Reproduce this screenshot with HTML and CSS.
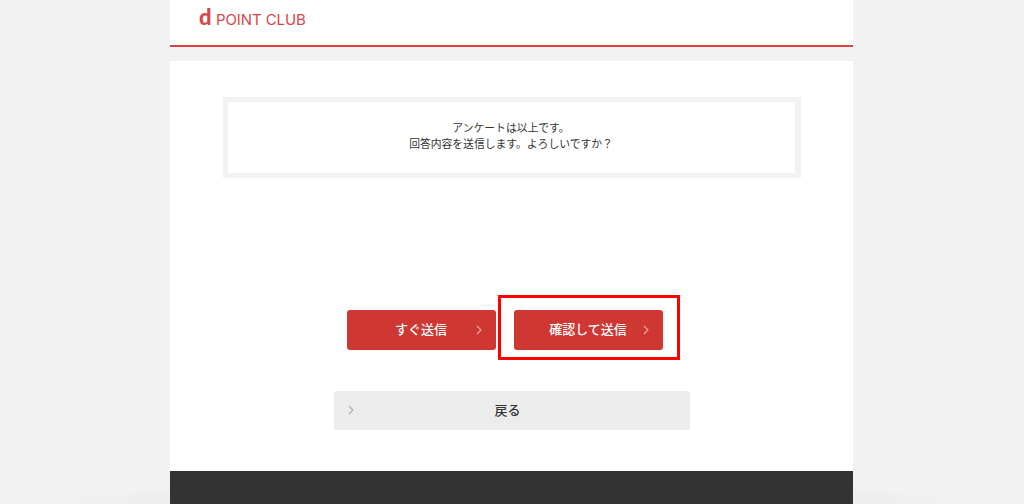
FILE: index.html
```html
<!DOCTYPE html>
<html lang="ja">
<head>
<meta charset="utf-8">
<title>dポイントクラブ アンケート</title>
<link rel="stylesheet" href="styles.css">
</head>
<body>
<div class="page">
  <header class="header">
    <div class="logo"><span class="logo-d">d</span><span class="logo-text">POINT CLUB</span></div>
  </header>
  <main class="main">
    <div class="notice">
      <p>アンケートは以上です。</p>
      <p>回答内容を送信します。よろしいですか？</p>
    </div>
    <div class="actions">
      <a class="btn btn-red">すぐ送信<svg class="chev" viewBox="0 0 6 10"><path d="M1 1l4 4-4 4"/></svg></a>
      <a class="btn btn-red btn-marked">確認して送信<svg class="chev" viewBox="0 0 6 10"><path d="M1 1l4 4-4 4"/></svg></a>
    </div>
    <a class="btn-back"><svg class="chev chev-back" viewBox="0 0 6 10"><path d="M1 1l4 4-4 4"/></svg>戻る</a>
  </main>
  <footer class="footer"></footer>
</div>
</body>
</html>
```
FILE: styles.css
```css
* { box-sizing: border-box; }
html, body { margin: 0; height: 100%; }
body {
  background: radial-gradient(ellipse 470px 26px at 50% 100%, #e0e0e0, #f2f2f2) #f2f2f2;
  font-family: "Noto Sans CJK JP", "Noto Sans", sans-serif;
  color: #333;
  overflow: hidden;
}
p { margin: 0; }
.page {
  width: 683px;
  margin-left: 170px;
  height: 504px;
  display: flex;
  flex-direction: column;
}
.header {
  height: 47px;
  background: #fff;
  border-bottom: 2px solid #e0433f;
  padding: 4px 0 0 29px;
}
.logo { display: flex; align-items: baseline; color: #d9454a; line-height: 26px; }
.logo-d { font: 900 22px/26px "Lato", sans-serif; width: 17px; }
.logo-text { font: 400 15px/26px "Inter", sans-serif; letter-spacing: -.1px; }
.main {
  margin-top: 14px;
  height: 410px;
  background: #fff;
  display: flex;
  flex-direction: column;
  align-items: center;
  padding-top: 36px;
}
.notice {
  width: 578px;
  height: 81px;
  border-style: solid;
  border-color: #f2f2f2;
  border-width: 5px 6px 5px 5px;
  display: flex;
  flex-direction: column;
  justify-content: center;
  align-items: center;
  font-size: 10.8px;
  line-height: 16px;
  padding-bottom: 5px;
}
.actions {
  margin: 132px 14px 0 0;
  display: flex;
  gap: 18px;
}
.btn {
  position: relative;
  width: 149px;
  height: 40px;
  border-radius: 3px;
  display: flex;
  align-items: center;
  justify-content: center;
  font-size: 13px;
  font-weight: 500;
  padding-bottom: 3px;
}
.btn-red { background: #cf3733; color: #fff; }
.btn-marked::after {
  content: "";
  position: absolute;
  inset: -15px -17px -10px -16px;
  border: 3px solid #f00;
}
.chev {
  width: 6px;
  height: 10px;
  position: absolute;
  right: 14px;
  top: 15px;
  fill: none;
  stroke: #eda9a6;
  stroke-width: 1.1;
}
.btn-back {
  position: relative;
  margin-top: 41px;
  width: 356px;
  height: 39px;
  border-radius: 3px;
  background: #ececec;
  display: flex;
  align-items: center;
  justify-content: center;
  font-size: 13px;
  font-weight: 500;
  color: #333;
  padding: 0 8px 2px 0;
}
.chev-back { right: auto; left: 14px; top: 14px; stroke: #aaa; }
.footer {
  flex: 1;
  background: #333;
}
```
